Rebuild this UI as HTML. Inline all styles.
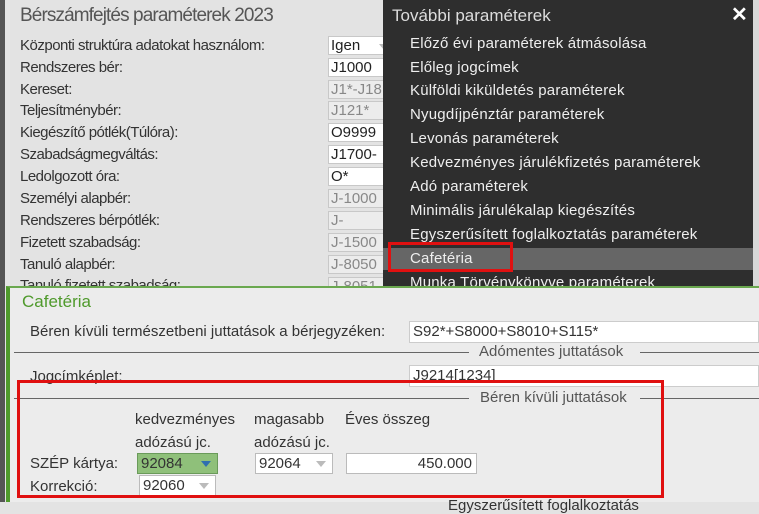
<!DOCTYPE html>
<html><head><meta charset="utf-8"><style>
*{margin:0;padding:0;box-sizing:border-box}
body{width:759px;height:502px;overflow:hidden;background:#e3e3e3;font-family:"Liberation Sans",Arial,sans-serif;position:relative;color:#333}
.a{position:absolute;white-space:nowrap}
.l{font-size:15px;color:#333;left:20px;letter-spacing:-0.5px}
.in{position:absolute;left:328px;width:60px;height:19px;border:1px solid #c8c8c8;background:#fff;font-size:15px;padding-left:2px;line-height:17px;color:#222}
.in.g{background:#ececec;color:#888}
.m{left:410px;font-size:15px;color:#eee;letter-spacing:0.2px}
.b{font-size:15px;color:#333}
.sel{position:absolute;height:21px;border:1px solid #bbb;background:#fff;font-size:15px;line-height:19px;padding-left:3px}
.tri{position:absolute;right:6px;top:7px;width:0;height:0;border-left:5px solid transparent;border-right:5px solid transparent;border-top:6px solid #bbb}
</style></head><body>
<div class="a" style="left:0;top:0;width:5px;height:502px;background:#555"></div>
<div class="a" style="left:20px;top:5px;font-size:19px;color:#555;letter-spacing:-0.9px">Bérszámfejtés paraméterek 2023</div>
<div class="a l" style="top:37px">Központi struktúra adatokat használom:</div>
<div class="a l" style="top:59px">Rendszeres bér:</div>
<div class="a l" style="top:81px">Kereset:</div>
<div class="a l" style="top:102px">Teljesítménybér:</div>
<div class="a l" style="top:124px">Kiegészítő pótlék(Túlóra):</div>
<div class="a l" style="top:146px">Szabadságmegváltás:</div>
<div class="a l" style="top:168px">Ledolgozott óra:</div>
<div class="a l" style="top:190px">Személyi alapbér:</div>
<div class="a l" style="top:212px">Rendszeres bérpótlék:</div>
<div class="a l" style="top:234px">Fizetett szabadság:</div>
<div class="a l" style="top:256px">Tanuló alapbér:</div>
<div class="a l" style="top:277px">Tanuló fizetett szabadság:</div>
<div class="in" style="top:36px">Igen<div class="tri" style="right:-2px"></div></div>
<div class="in" style="top:58px">J1000</div>
<div class="in g" style="top:80px">J1*-J18</div>
<div class="in g" style="top:101px">J121*</div>
<div class="in" style="top:123px">O9999</div>
<div class="in" style="top:145px">J1700-</div>
<div class="in" style="top:167px">O*</div>
<div class="in g" style="top:189px">J-1000</div>
<div class="in g" style="top:211px">J-</div>
<div class="in g" style="top:233px">J-1500</div>
<div class="in g" style="top:255px">J-8050</div>
<div class="in g" style="top:277px">J-8051</div>

<div class="a" style="left:383px;top:0;width:370px;height:290px;background:#2e2e2e"></div>
<div class="a" style="left:753px;top:0;width:6px;height:290px;background:#d8d8d8"></div>
<div class="a" style="left:392px;top:6px;font-size:17px;color:#ddd">További paraméterek</div>
<div class="a" style="left:731px;top:2px;font-size:20px;color:#fff;font-weight:bold">✕</div>
<div class="a" style="left:383px;top:248px;width:370px;height:22px;background:#666"></div>
<div class="a m" style="top:35px">Előző évi paraméterek átmásolása</div>
<div class="a m" style="top:59px">Előleg jogcímek</div>
<div class="a m" style="top:82px">Külföldi kiküldetés paraméterek</div>
<div class="a m" style="top:106px">Nyugdíjpénztár paraméterek</div>
<div class="a m" style="top:130px">Levonás paraméterek</div>
<div class="a m" style="top:154px">Kedvezményes járulékfizetés paraméterek</div>
<div class="a m" style="top:178px">Adó paraméterek</div>
<div class="a m" style="top:202px">Minimális járulékalap kiegészítés</div>
<div class="a m" style="top:226px">Egyszerűsített foglalkoztatás paraméterek</div>
<div class="a m" style="top:250px">Cafetéria</div>
<div class="a m" style="top:274px">Munka Törvénykönyve paraméterek</div>
<div class="a" style="left:388px;top:242px;width:125px;height:30px;border:3px solid #e01010"></div>

<div class="a" style="left:6px;top:286px;width:753px;height:216px;background:#ececec;border-top:2px solid #6aa84f;border-left:4px solid #4f9a2c"></div>
<div class="a" style="left:22px;top:292px;font-size:17px;color:#4f9a2c">Cafetéria</div>
<div class="a b" style="left:30px;top:323px">Béren kívüli természetbeni juttatások a bérjegyzéken:</div>
<div class="a b" style="left:409px;top:321px;width:350px;height:22px;background:#fff;border:1px solid #ccc;padding-left:3px;line-height:20px">S92*+S8000+S8010+S115*</div>
<div class="a" style="left:14px;top:352px;width:455px;height:1px;background:#666"></div>
<div class="a b" style="left:479px;top:343px;color:#555">Adómentes juttatások</div>
<div class="a" style="left:640px;top:352px;width:119px;height:1px;background:#666"></div>
<div class="a b" style="left:30px;top:368px">Jogcímképlet:</div>
<div class="a b" style="left:409px;top:365px;width:350px;height:22px;background:#fff;border:1px solid #ccc;padding-left:3px;line-height:20px">J9214[1234]</div>
<div class="a" style="left:14px;top:398px;width:455px;height:1px;background:#666"></div>
<div class="a b" style="left:480px;top:389px;color:#555">Béren kívüli juttatások</div>
<div class="a" style="left:640px;top:398px;width:119px;height:1px;background:#666"></div>
<div class="a b" style="left:135px;top:411px">kedvezményes</div>
<div class="a b" style="left:135px;top:434px">adózású jc.</div>
<div class="a b" style="left:254px;top:411px">magasabb</div>
<div class="a b" style="left:254px;top:434px">adózású jc.</div>
<div class="a b" style="left:345px;top:411px">Éves összeg</div>
<div class="a b" style="left:30px;top:455px">SZÉP kártya:</div>
<div class="a b" style="left:30px;top:478px">Korrekció:</div>
<div class="sel" style="left:137px;top:453px;width:81px;background:#8fc07a;border-color:#6a9a5a">92084<div class="tri" style="border-top-color:#2f6fb0"></div></div>
<div class="sel" style="left:255px;top:453px;width:78px">92064<div class="tri"></div></div>
<div class="a b" style="left:346px;top:453px;width:131px;height:21px;border:1px solid #bbb;background:#fff;line-height:19px;text-align:right;padding-right:4px">450.000</div>
<div class="sel" style="left:139px;top:475px;width:77px">92060<div class="tri"></div></div>
<div class="a" style="left:17px;top:380px;width:647px;height:118px;border:3px solid #e01010"></div>
<div class="a b" style="left:448px;top:497px">Egyszerűsített foglalkoztatás</div>
</body></html>
